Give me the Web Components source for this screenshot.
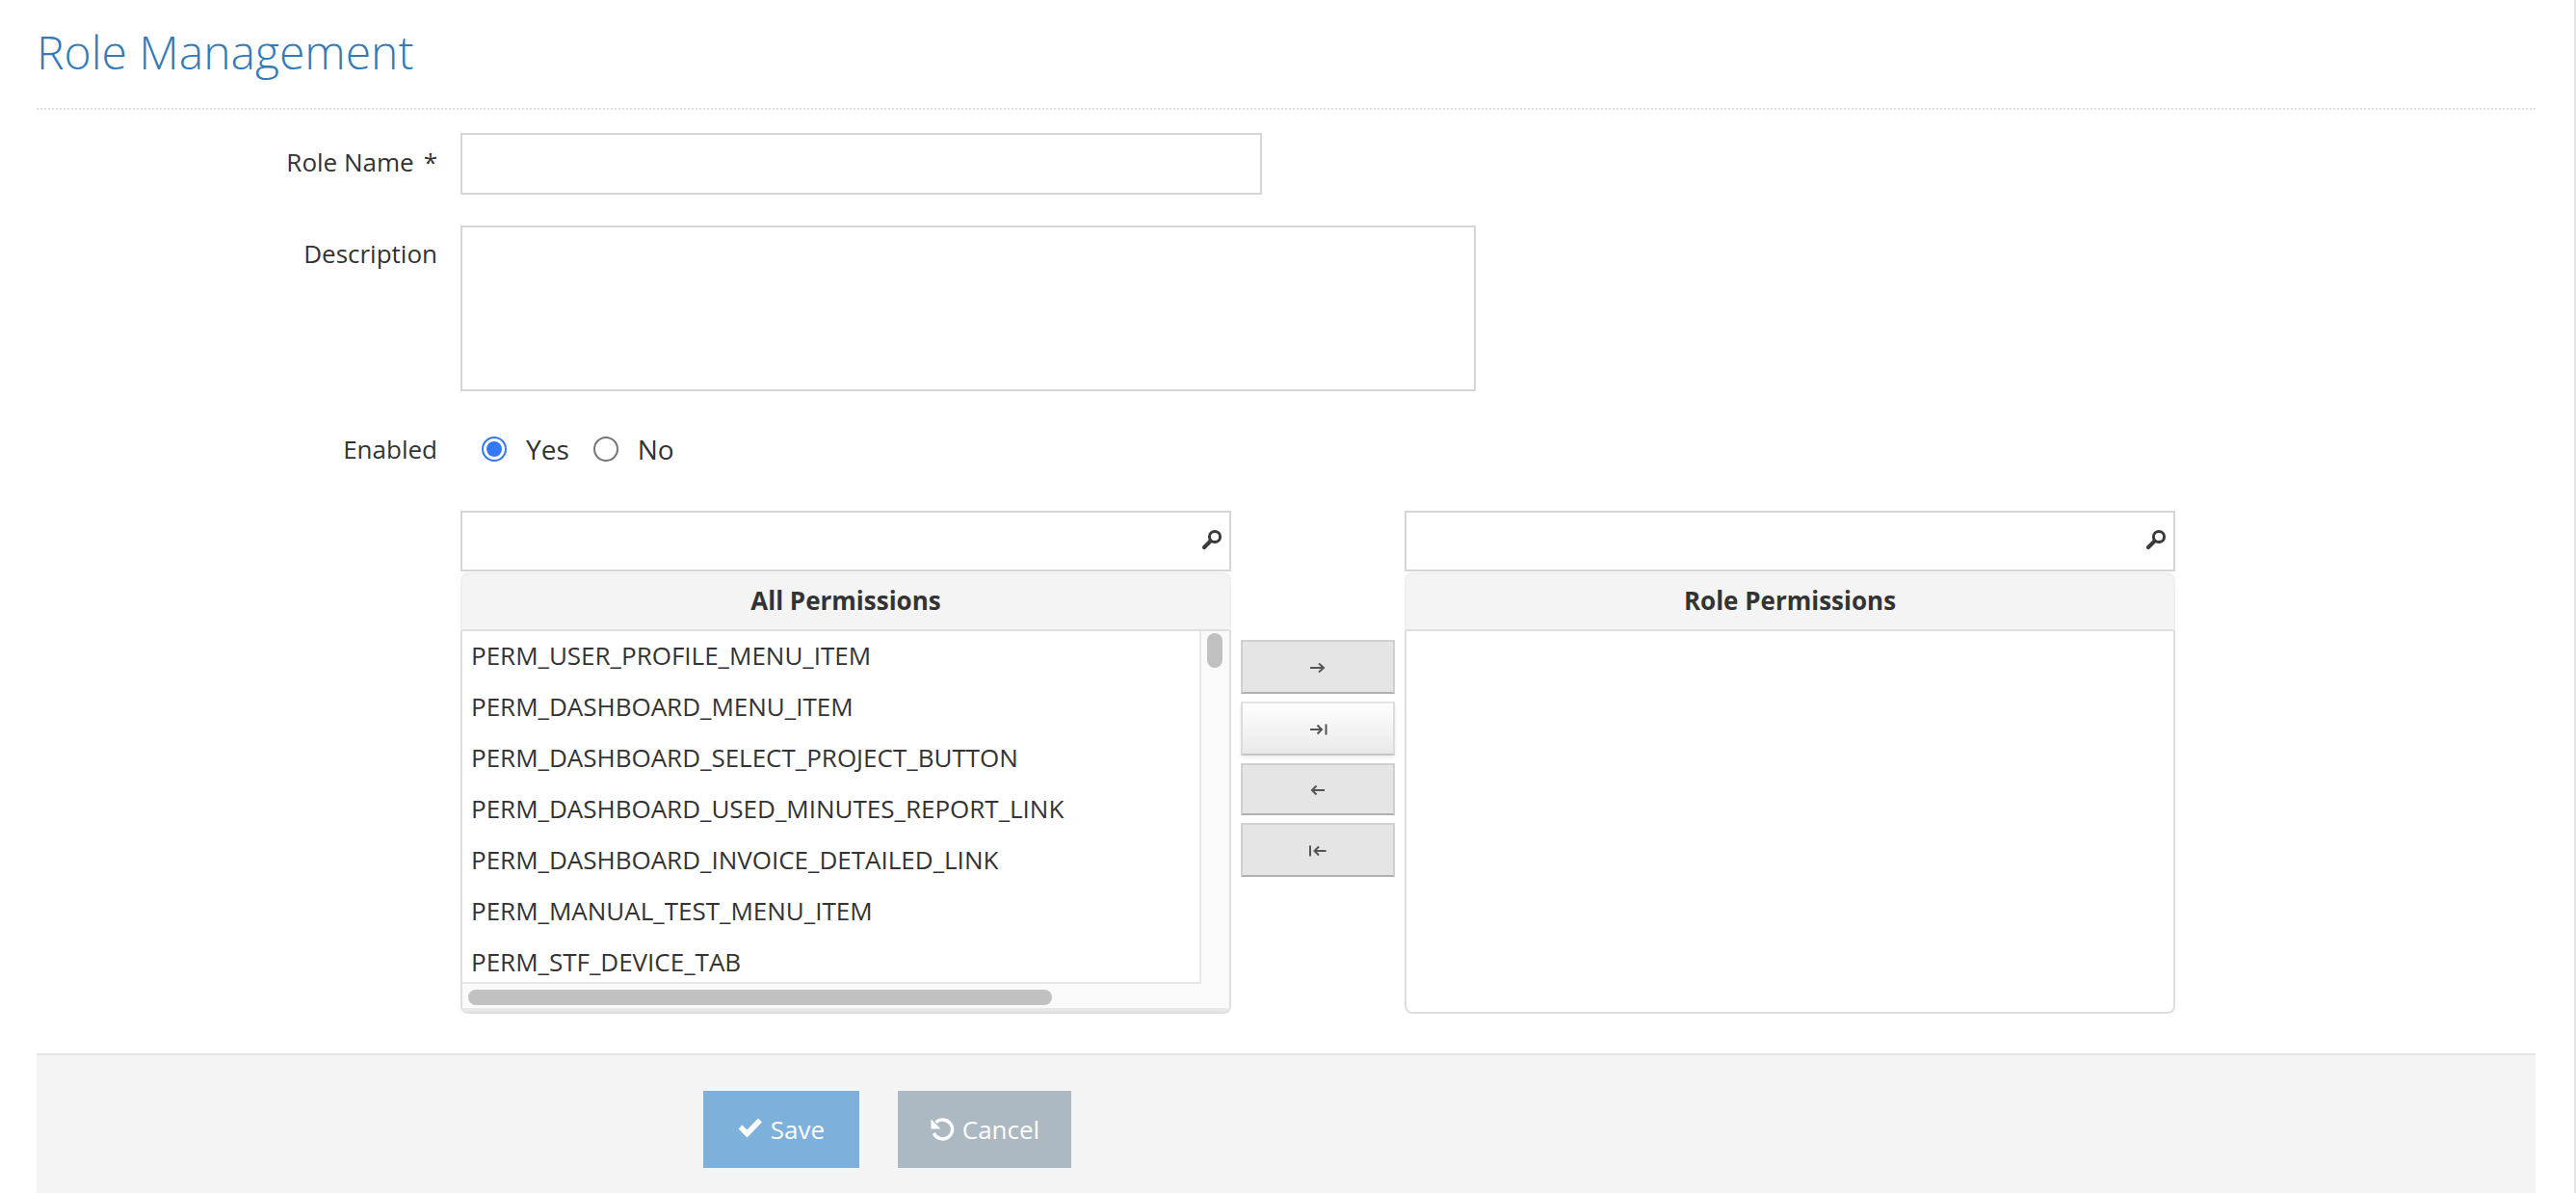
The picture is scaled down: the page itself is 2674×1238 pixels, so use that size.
<!DOCTYPE html>
<html lang="en">
<head>
<meta charset="utf-8">
<title>Role Management</title>
<style>
  html, body { margin: 0; padding: 0; background: #fff; }
  body { font-family: "Open Sans", "Liberation Sans", sans-serif; font-size: 26px; color: #333; }
</style>
</head>
<body>
<role-page></role-page>

<script>
class PageTitle extends HTMLElement {
  connectedCallback() {
    this.attachShadow({ mode: 'open' });
    this.shadowRoot.innerHTML = `
      <style>
        :host { display: block; height: 112px; border-bottom: 2px dotted #e2e2e2; }
        h1 {
          margin: 0;
          padding-top: 21px;
          font-size: 48px;
          font-weight: 300;
          line-height: 66px;
          color: #337ab7;
        }
      </style>
      <h1><slot></slot></h1>
    `;
  }
}

class FormRow extends HTMLElement {
  connectedCallback() {
    this.attachShadow({ mode: 'open' });
    this.shadowRoot.innerHTML = `
      <style>
        :host {
          display: grid;
          grid-template-columns: 416px 1fr;
          column-gap: 24px;
        }
        .label { text-align: right; line-height: 38px; padding-top: var(--label-top, 11px); color: #333; }
        .req { margin-left: 10px; }
      </style>
      <div class="label"><slot name="label"></slot>${this.hasAttribute('required') ? '<span class="req">*</span>' : ''}</div>
      <div><slot></slot></div>
    `;
  }
}

class RadioOption extends HTMLElement {
  connectedCallback() {
    const on = this.hasAttribute('checked');
    this.attachShadow({ mode: 'open' });
    this.shadowRoot.innerHTML = `
      <style>
        :host { display: inline-flex; align-items: center; gap: 20px; line-height: 38px; font-size: 28px; }
        .dot {
          box-sizing: border-box;
          width: 26px;
          height: 26px;
          border-radius: 50%;
          border: 2px solid ${on ? '#3478f6' : '#767676'};
          padding: 3px;
          background: #fff;
        }
        .dot i { display: block; width: 100%; height: 100%; border-radius: 50%; background: ${on ? '#3478f6' : 'transparent'}; }
      </style>
      <span class="dot"><i></i></span>
      <span><slot></slot></span>
    `;
  }
}

class SearchBox extends HTMLElement {
  connectedCallback() {
    this.attachShadow({ mode: 'open' });
    this.shadowRoot.innerHTML = `
      <style>
        :host {
          display: flex;
          align-items: center;
          justify-content: flex-end;
          box-sizing: border-box;
          height: 63px;
          border: 2px solid #d6d6d6;
          padding-right: 7px;
          padding-bottom: 4px;
        }
        svg { display: block; width: 22px; height: 22px; }
      </style>
      <svg viewBox="0 0 22 22">
        <circle cx="14" cy="8" r="5.6" fill="none" stroke="#3a3a3a" stroke-width="3"/>
        <path d="M9.5 12.5 3 19" fill="none" stroke="#3a3a3a" stroke-width="4" stroke-linecap="round"/>
      </svg>
    `;
  }
}

class ListPanel extends HTMLElement {
  connectedCallback() {
    const items = (this.getAttribute('items') || '').split(',').filter(Boolean);
    const scroll = items.length > 0;
    this.attachShadow({ mode: 'open' });
    this.shadowRoot.innerHTML = `
      <style>
        :host { display: block; }
        .head {
          box-sizing: border-box;
          height: 61px;
          margin-top: 1px;
          border: 2px solid #f0f0f0;
          border-bottom-color: #dedede;
          border-radius: 8px 8px 0 0;
          background: #f4f4f4;
          text-align: center;
          font-weight: 700;
          line-height: 54px;
          color: #333;
        }
        .body {
          box-sizing: border-box;
          height: 397px;
          border: solid #dedede;
          border-width: 0 2px 2px;
          border-radius: 0 0 8px 8px;
          overflow: hidden;
          display: grid;
          grid-template-columns: ${scroll ? '1fr 29px' : '1fr'};
          grid-template-rows: ${scroll ? '1fr 29px' : '1fr'};
        }
        .list {
          overflow: hidden;
          padding: 0 9px;
          border: solid #e8e8e8;
          border-width: 0 2px 2px 0;
          line-height: 51px;
          white-space: nowrap;
          color: #333;
        }
        .list div { height: 53px; }
        .vtrack { background: #fafafa; padding: 2px 0 0 6px; }
        .vtrack i { display: block; width: 16px; height: 36px; border-radius: 8px; background: #c1c1c1; }
        .htrack { grid-column: 1 / 3; background: #fafafa; padding: 6px 0 0 6px; border-bottom: 4px solid #e8e8e8; }
        .htrack i { display: block; width: 606px; height: 16px; border-radius: 8px; background: #c1c1c1; }
      </style>
      <search-box></search-box>
      <div class="head"><slot></slot></div>
      <div class="body">
        ${scroll ? `
          <div class="list">${items.map(i => `<div>${i}</div>`).join('')}</div>
          <div class="vtrack"><i></i></div>
          <div class="htrack"><i></i></div>
        ` : ''}
      </div>
    `;
  }
}

class MoveButton extends HTMLElement {
  connectedCallback() {
    const paths = {
      right: 'M1 8H15M10 3.5 15 8 10 12.5',
      last: 'M1 8H13M8.5 3.5 13 8 8.5 12.5M17.5 2.5V13.5',
      left: 'M16 8H3M7.5 3.5 3 8 7.5 12.5',
      first: 'M17.5 8H5.5M10 3.5 5.5 8 10 12.5M1 2.5V13.5'
    };
    const hover = this.hasAttribute('hover');
    this.attachShadow({ mode: 'open' });
    this.shadowRoot.innerHTML = `
      <style>
        :host {
          display: flex;
          align-items: center;
          justify-content: center;
          box-sizing: border-box;
          height: var(--h, 56px);
          border: 2px solid #d0d0d0;
          border-bottom-color: #b0b0b0;
          background: ${hover ? 'linear-gradient(#fff, #e9e9e9)' : '#e5e5e5'};
          ${hover ? 'border-color: #e4e4e4 #dcdcdc #c4c4c4; box-shadow: 0 2px 4px rgba(0,0,0,.08);' : ''}
        }
        svg { display: block; width: 19px; height: 16px; margin-top: 2px; }
      </style>
      <svg viewBox="0 0 19 16"><path d="${paths[this.getAttribute('dir')]}" fill="none" stroke="#555" stroke-width="2"/></svg>
    `;
  }
}

class DualList extends HTMLElement {
  connectedCallback() {
    this.attachShadow({ mode: 'open' });
    this.shadowRoot.innerHTML = `
      <style>
        :host {
          display: grid;
          grid-template-columns: 800px 160px 800px;
          column-gap: 10px;
          margin-left: 440px;
        }
        .moves { display: flex; flex-direction: column; gap: 8px; padding-top: 134px; }
      </style>
      <slot name="from"></slot>
      <div class="moves">
        <move-button dir="right"></move-button>
        <move-button dir="last" hover></move-button>
        <move-button dir="left" style="--h:54px"></move-button>
        <move-button dir="first"></move-button>
      </div>
      <slot name="to"></slot>
    `;
  }
}

class ActionButton extends HTMLElement {
  connectedCallback() {
    const icons = {
      check: '<path d="M2.5 10.5 9.5 17.5 23 3.5" fill="none" stroke="#fff" stroke-width="5.5"/>',
      undo: '<path d="M6.5 5.8A10 10 0 1 1 4.4 17" fill="none" stroke="#fff" stroke-width="3.4"/><path d="M1.5 2.5V12.5H11.5Z" fill="#fff"/>'
    };
    this.attachShadow({ mode: 'open' });
    this.shadowRoot.innerHTML = `
      <style>
        :host {
          display: flex;
          align-items: center;
          justify-content: center;
          gap: 8px;
          box-sizing: border-box;
          height: 80px;
          width: var(--w);
          background: var(--bg);
          color: #fff;
          font-size: 26px;
          line-height: 38px;
        }
        svg { display: block; width: 26px; height: 26px; flex: none; }
      </style>
      <svg viewBox="0 0 26 26">${icons[this.getAttribute('icon')]}</svg>
      <span><slot></slot></span>
    `;
  }
}

class RolePage extends HTMLElement {
  connectedCallback() {
    const items = [
      'PERM_USER_PROFILE_MENU_ITEM',
      'PERM_DASHBOARD_MENU_ITEM',
      'PERM_DASHBOARD_SELECT_PROJECT_BUTTON',
      'PERM_DASHBOARD_USED_MINUTES_REPORT_LINK',
      'PERM_DASHBOARD_INVOICE_DETAILED_LINK',
      'PERM_MANUAL_TEST_MENU_ITEM',
      'PERM_STF_DEVICE_TAB'
    ].join(',');
    this.attachShadow({ mode: 'open' });
    this.shadowRoot.innerHTML = `
      <style>
        :host {
          display: flex;
          flex-direction: column;
          box-sizing: border-box;
          height: 100vh;
          overflow: hidden;
          padding: 0 40px 0 38px;
          border-right: 2px solid #e5e5e5;
          font-family: "Open Sans", "Liberation Sans", sans-serif;
          font-size: 26px;
          color: #333;
        }
        .field {
          display: block;
          box-sizing: border-box;
          border: 2px solid #d6d6d6;
          border-radius: 0;
          background: #fff;
          outline: none;
          margin: 0;
          padding: 0 10px;
          font: inherit;
          resize: none;
        }
        .name { width: 832px; height: 64px; }
        .desc { width: 1054px; height: 172px; }
        .row-name { margin-top: 24px; }
        .row-desc { margin-top: 32px; --label-top: 10px; }
        .row-enabled { margin-top: 41px; --label-top: 0px; }
        .radios { display: flex; gap: 25px; padding-left: 22px; height: 38px; align-items: center; }
        dual-list { margin-top: 45px; }
        .actions {
          flex: 1;
          display: flex;
          gap: 40px;
          margin-top: 41px;
          padding: 37px 0 0 692px;
          border-top: 2px solid #e4e4e4;
          background: #f4f4f4;
        }
      </style>
      <page-title>Role Management</page-title>
      <form-row class="row-name" required>
        <span slot="label">Role Name</span>
        <input class="field name" type="text" aria-label="Role Name">
      </form-row>
      <form-row class="row-desc">
        <span slot="label">Description</span>
        <textarea class="field desc" aria-label="Description"></textarea>
      </form-row>
      <form-row class="row-enabled">
        <span slot="label">Enabled</span>
        <div class="radios">
          <radio-option checked>Yes</radio-option>
          <radio-option>No</radio-option>
        </div>
      </form-row>
      <dual-list>
        <list-panel slot="from" items="${items}">All Permissions</list-panel>
        <list-panel slot="to">Role Permissions</list-panel>
      </dual-list>
      <div class="actions">
        <action-button icon="check" style="--w:162px;--bg:#7eb0dc">Save</action-button>
        <action-button icon="undo" style="--w:180px;--bg:#acb9c2">Cancel</action-button>
      </div>
    `;
  }
}

customElements.define('page-title', PageTitle);
customElements.define('form-row', FormRow);
customElements.define('radio-option', RadioOption);
customElements.define('search-box', SearchBox);
customElements.define('list-panel', ListPanel);
customElements.define('move-button', MoveButton);
customElements.define('dual-list', DualList);
customElements.define('action-button', ActionButton);
customElements.define('role-page', RolePage);
</script>
</body>
</html>
